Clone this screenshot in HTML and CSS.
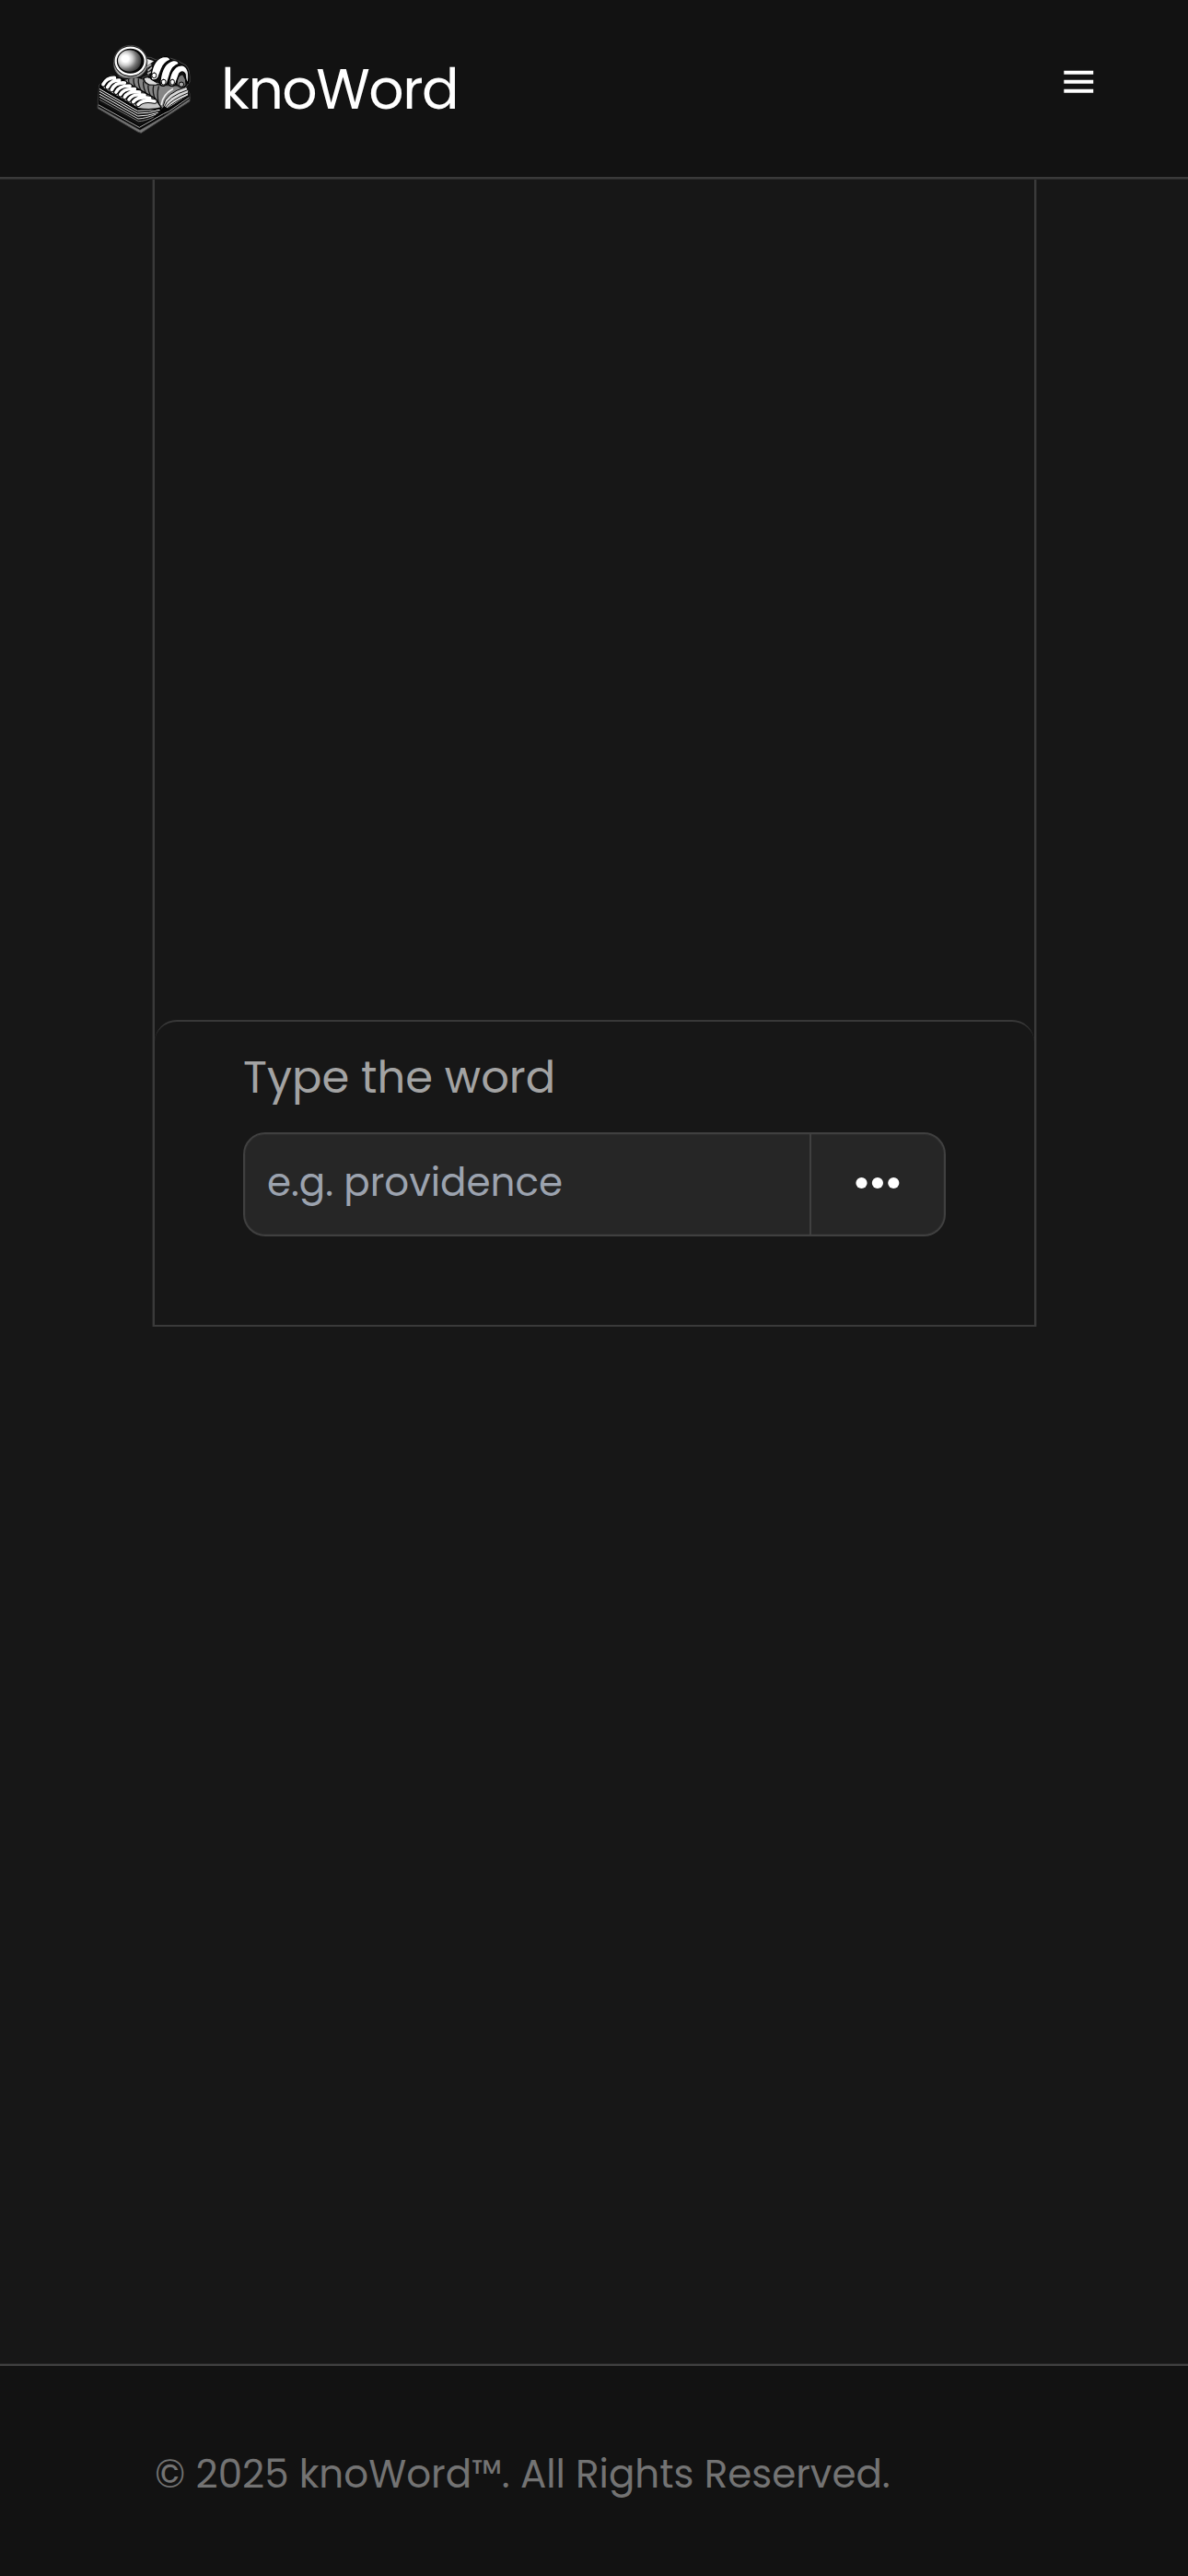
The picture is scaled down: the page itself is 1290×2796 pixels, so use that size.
FILE: index.html
```
<!DOCTYPE html>
<html lang="en">
<head>
<meta charset="utf-8">
<meta name="viewport" content="width=device-width">
<title>knoWord</title>
<link rel="stylesheet" href="styles.css">
</head>
<body>
<header class="header">
  <a class="brand">
    <svg class="logo" viewBox="0 0 390 390" fill="none" stroke-linecap="round" stroke-linejoin="round" aria-hidden="true">
      <defs>
        <linearGradient id="finger" x1="0" y1="0" x2="1" y2="1"><stop offset=".5" stop-color="#fff"/><stop offset="1" stop-color="#999"/></linearGradient>
        <radialGradient id="glass" cx=".32" cy=".4" r=".75"><stop offset=".2" stop-color="#fff"/><stop offset=".42" stop-color="#ccc"/><stop offset=".65" stop-color="#777"/><stop offset="1" stop-color="#222"/></radialGradient>
      </defs>
      <!-- book block -->
      <path d="M50 250 188 322 348 226V240L190 343 180 340 49 263Z" fill="#777" stroke="#444" stroke-width="3"/>
      <path d="M54 186 90 155 165 170 337 192 348 215V232L278 280 262 290 186 334 50 258 49 240Z" fill="#050505" stroke="#555" stroke-width="2"/>
      <path d="M53 193Q60 207 115 234L180 270Q220 274 250 266L255 276 185 319 54 245Z" fill="#111"/>
      <g stroke="#f5f5f5" stroke-width="3">
        <path d="M55 200 178 271Q216 272 253 262"/>
        <path d="M55 208 178 279Q216 280 250 268"/>
        <path d="M55 217 179 288Q210 288 244 277"/>
        <path d="M55 226 180 297Q204 296 237 283" stroke="#ccc"/>
        <path d="M55 235 181 305Q200 305 229 292" stroke="#777"/>
        <path d="M52 252 184 325 262 281 281 272 345 228" stroke="#aaa"/>
      </g>
      <!-- right page -->
      <path d="M130 170 170 160 250 180 338 193Q295 207 267 256L256 268Q235 240 180 216Z" fill="#858585" stroke="#000" stroke-width="4"/>
      <g stroke="#151515" stroke-width="4">
        <path d="M150 165Q145 178 159 194M166 164Q161 180 177 204M181 168Q178 186 194 214M197 177Q195 196 211 224M213 185Q210 204 225 233M230 190Q225 210 238 241M247 192Q239 218 248 251"/>
      </g>
      <path d="M262 253Q267 214 337 193L344 205 344 221 276 264Z" fill="#d9d9d9" stroke="#000" stroke-width="3"/>
      <path d="M265 258Q276 224 341 203M269 261Q286 235 344 212M274 263Q295 242 346 220" stroke="#111" stroke-width="3"/>
      <path d="M256 250Q260 218 292 200" stroke="#eee" stroke-width="5"/>
      <!-- left page -->
      <path d="M61 188Q75 156 105 158L235 230 256 261Q220 270 180 263L67 198Z" fill="#c5c5c5" stroke="#000" stroke-width="4"/>
      <g stroke="#000" stroke-width="17">
        <path d="M66 185Q78 162 103 163M80 194Q92 170 119 171M94 202Q106 178 136 180M108 210Q120 187 153 190M122 218Q134 196 169 200M136 226Q149 204 185 210M150 234Q164 213 201 220M164 242Q180 222 218 230M180 250Q196 232 234 240"/>
      </g>
      <g stroke="#fff" stroke-width="11">
        <path d="M66 185Q78 162 103 163M80 194Q92 170 119 171M94 202Q106 178 136 180M108 210Q120 187 153 190M122 218Q134 196 169 200M136 226Q149 204 185 210M150 234Q164 213 201 220M164 242Q180 222 218 230M180 250Q196 232 234 240"/>
      </g>
      <!-- hand -->
      <path d="M205 96Q222 94 238 105L268 94 305 106 336 123Q350 137 348 177L337 192Q325 205 308 191L244 188 213 188Q193 178 194 163L214 155Z" fill="#111" stroke="#666" stroke-width="2"/>
      <path d="M207 101 231 109 209 125Z" fill="#eee"/>
      <path d="M210 128 221 121M214 139 224 130M212 149 221 145" stroke="#bbb" stroke-width="5"/>
      <path d="M198 166Q210 154 227 171Q240 183 256 180 237 191 216 186 201 180 198 166Z" fill="#ddd" stroke="#000" stroke-width="3"/>
      <path d="M306 185Q306 155 325 152 338 168 336 187 323 202 306 185Z" fill="#777" stroke="#000" stroke-width="3"/>
      <circle cx="321" cy="185" r="8" fill="#aaa" stroke="#000" stroke-width="3"/>
      <g fill="url(#finger)" stroke="#000" stroke-width="4">
        <path d="M281 176C286 135 307 121 326 123Q350 132 343 181 334 175 333 151 325 137 314 150L303 180Q295 196 282 187Z"/>
        <path d="M252 174C256 134 269 113 294 107Q310 105 313 118 291 126 285 147L275 180Q266 195 253 187Z"/>
        <path d="M222 158C226 119 240 97 268 94Q282 94 285 105 263 114 257 133L246 162Q237 176 223 168Z"/>
      </g>
      <g fill="#fff" stroke="#000" stroke-width="3">
        <rect x="225" y="147" width="14" height="17" rx="7"/><rect x="256" y="169" width="14" height="17" rx="6"/><rect x="285" y="169" width="13" height="17" rx="6"/>
      </g>
      <!-- magnifying glass -->
      <path d="M101 114V125Q108 165 154 165 200 164 210 124V108Z" fill="#333" stroke="#777" stroke-width="2"/>
      <path d="M105 126Q113 160 154 160 193 160 205 128" stroke="#bbb" stroke-width="5"/>
      <ellipse cx="155" cy="109" rx="54" ry="51" fill="#000" stroke="#666" stroke-width="2"/>
      <ellipse cx="155" cy="109" rx="48" ry="44" fill="#050505" stroke="#fff" stroke-width="7"/>
      <ellipse cx="152" cy="108" rx="38" ry="35" fill="url(#glass)"/>
    </svg>
    <span class="brand-name">knoWord</span>
  </a>
  <button class="menu" aria-label="Menu">
    <svg class="menu-icon" viewBox="0 0 36 30" fill="#fff"><path d="M3.3 4.8h31.9v3.9H3.3zM3.3 14.8h31.9v3.9H3.3zM3.3 24.8h31.9v3.9H3.3z"/></svg>
  </button>
</header>
<main class="main">
  <section class="board">
    <form class="panel">
      <label class="label" for="word">Type the word</label>
      <div class="field">
        <input class="input" id="word" type="text" placeholder="e.g. providence">
        <button class="more" type="button" aria-label="More">
          <svg class="dots" viewBox="0 0 48 14" fill="#fff"><circle cx="6.5" cy="7" r="6.1"/><circle cx="23.9" cy="7" r="6.1"/><circle cx="41.3" cy="7" r="6.1"/></svg>
        </button>
      </div>
    </form>
  </section>
</main>
<footer class="footer">© 2025 knoWord™. All Rights Reserved.</footer>
</body>
</html>
```
FILE: styles.css
```
* { box-sizing: border-box; }
body {
  margin: 0;
  height: 2796px;
  display: flex;
  flex-direction: column;
  background: #171717;
  color: #fff;
  font-family: Poppins, Inter, sans-serif;
}
button, input { font: inherit; color: inherit; background: none; border: 0; padding: 0; margin: 0; }
.header {
  height: 194px;
  flex: none;
  display: flex;
  justify-content: space-between;
  align-items: flex-start;
  padding: 0 100px 0 90px;
  background: #121212;
  border-bottom: 2px solid #3a3a3a;
  box-shadow: 0 1px #292929;
}
.brand { display: flex; align-items: center; gap: 20px; height: 192px; }
.logo { width: 130px; height: 130px; display: block; margin-bottom: 2px; }
.brand-name { font-size: 60px; line-height: 90px; letter-spacing: -1.5px; padding-top: 2px; }
.menu { margin-top: 72px; width: 38px; height: 30px; }
.menu-icon { width: 36px; height: 30px; display: block; }
.main { flex: 1; display: flex; flex-direction: column; }
.board {
  width: 959px;
  height: 1246px;
  margin-left: 166px;
  display: flex;
  flex-direction: column;
  justify-content: flex-end;
  border: solid #3a3a3a;
  border-width: 0 2px 2px;
  box-shadow: 0 0 0 1px #252525;
  clip-path: inset(1px -1px 0 -1px);
}
.panel {
  height: 331px;
  padding: 26px 96px 0;
  border-top: 2px solid #383838;
  border-radius: 24px 24px 0 0;
}
.label { display: block; font-size: 48px; line-height: 70px; color: #a3a3a3; }
.field {
  display: flex;
  height: 113px;
  margin: 24px 0 0;
  width: 763px;
  overflow: hidden;
  background: #262626;
  border: 2px solid #404040;
  border-radius: 24px;
  box-shadow: inset 0 0 0 1px #2c2c2c;
}
.input { flex: 1; min-width: 0; padding: 0 0 4px 24px; font-size: 42px; }
.input::placeholder { color: #9ca3af; opacity: 1; }
.more { width: 146px; border-left: 2px solid #404040; display: flex; align-items: center; justify-content: center; }
.dots { width: 48px; height: 14px; margin-bottom: 3px; }
.footer {
  flex: none;
  height: 230px;
  padding: 88px 168px 0;
  background: #121212;
  border-top: 2px solid #404040;
  box-shadow: 0 -1px #252525;
  font-size: 42px;
  line-height: 60px;
  color: #737373;
}
```
